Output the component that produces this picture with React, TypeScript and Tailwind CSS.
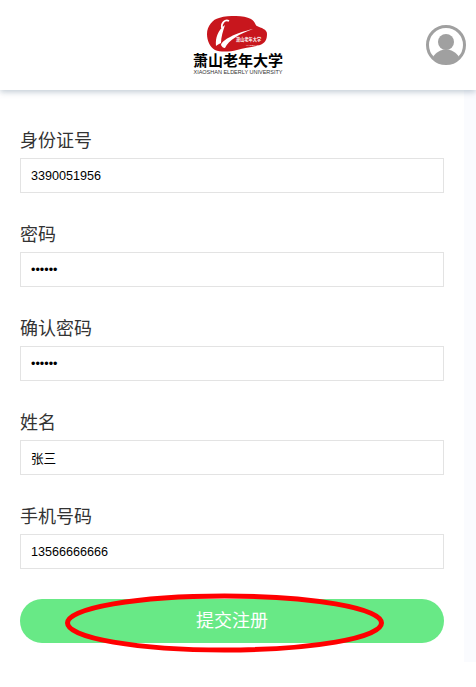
const fields = [
  { label: '身份证号', value: '3390051956', type: 'text' },
  { label: '密码', value: '123456', type: 'password' },
  { label: '确认密码', value: '123456', type: 'password' },
  { label: '姓名', value: '张三', type: 'text' },
  { label: '手机号码', value: '13566666666', type: 'text' },
]

function Logo() {
  return (
    <div className="flex flex-col items-center">
      <svg width="62" height="37" viewBox="0 0 62 37" className="block">
        <path
          d="M0 19C0 11 6 4 12 3C18 1 23 1 29 1C35 1 40 2 44 4C48 6 48 10 50 11C54 13 60 14 60 19C60 25 58 28 53 30C47 32 38 33 30 35C22 37 13 37 8 35C3 32 0 26 0 19Z"
          fill="#c8161d"
        />
        <path d="M9 31C8 23 11 15 18 10C16 16 14 22 14 28C12 29 10 30 9 31Z" fill="#fff" />
        <path d="M14 30C15 25 28 18 46 14C32 19 22 25 18 33C16 33 15 32 14 30Z" fill="#fff" />
        <path d="M22 6C18 4 14 8 15 13" fill="none" stroke="#fff" strokeWidth="1.8" />
        <text x="29" y="26" fill="#fff" fontSize="4.2" fontWeight="700" fontFamily="'Noto Sans CJK SC', sans-serif">
          萧山老年大学
        </text>
        <text x="39" y="31" fill="#fff" fontSize="2.4" fontFamily="'Liberation Sans', sans-serif">
          XIAOSHAN
        </text>
      </svg>
      <div className="mt-[-1px] flex h-[18px] items-center text-[15px] leading-[18px] font-bold text-black [font-family:'Noto_Sans_CJK_SC',sans-serif]">
        萧山老年大学
      </div>
      <div className="text-[5.5px] leading-[7px] whitespace-nowrap text-[#333] [font-family:'Liberation_Sans',sans-serif]">
        XIAOSHAN ELDERLY UNIVERSITY
      </div>
    </div>
  )
}

function Avatar() {
  return (
    <svg width="42" height="42" viewBox="0 0 42 42" className="block">
      <circle cx="21" cy="21" r="18.5" fill="#fff" stroke="#a0a0a0" strokeWidth="3" />
      <circle cx="21" cy="18" r="8" fill="#a0a0a0" />
      <path d="M8 33C11 28 16 25.500 21 25.500C26 25.500 31 28 34 33C31 37 26 39 21 39C16 39 11 37 8 33Z" fill="#a0a0a0" />
    </svg>
  )
}

export default function App() {
  return (
    <div className="relative h-[687px] w-[476px] overflow-hidden bg-white [font-family:'Liberation_Sans','Noto_Sans_CJK_SC',sans-serif]">
      <header className="relative z-10 flex h-[90px] items-center justify-center bg-white shadow-[0_2px_6px_rgba(120,140,160,0.45)]">
        <div className="pt-[1px]">
          <Logo />
        </div>
        <div className="absolute top-[24px] right-[9px]">
          <Avatar />
        </div>
      </header>
      <div className="flex h-[572px]">
        <main className="flex-1 pt-[39px] pl-[20px] pr-[20px]">
          <form className="flex w-[424px] flex-col gap-[30px]">
            {fields.map((f) => (
              <div key={f.label} className="flex flex-col">
                <label className="h-[23px] text-[18px] leading-[24px] text-[#333]">{f.label}</label>
                <input
                  readOnly
                  type={f.type}
                  value={f.value}
                  className="mt-[6px] h-[35px] w-full border border-[#e3e3e3] bg-white px-[10px] text-[12.6px] text-black outline-none"
                />
              </div>
            ))}
            <button type="button" className="h-[44px] w-full rounded-full bg-[#68e986] text-[18px] text-white">
              提交注册
            </button>
          </form>
        </main>
        <div className="w-[12px] bg-[#fafbfe]" />
      </div>
      <svg className="absolute top-[590px] left-[62px]" width="326" height="66" viewBox="0 0 326 66">
        <ellipse cx="162.5" cy="33" rx="157" ry="27" fill="none" stroke="#ff0000" strokeWidth="5" />
      </svg>
    </div>
  )
}
